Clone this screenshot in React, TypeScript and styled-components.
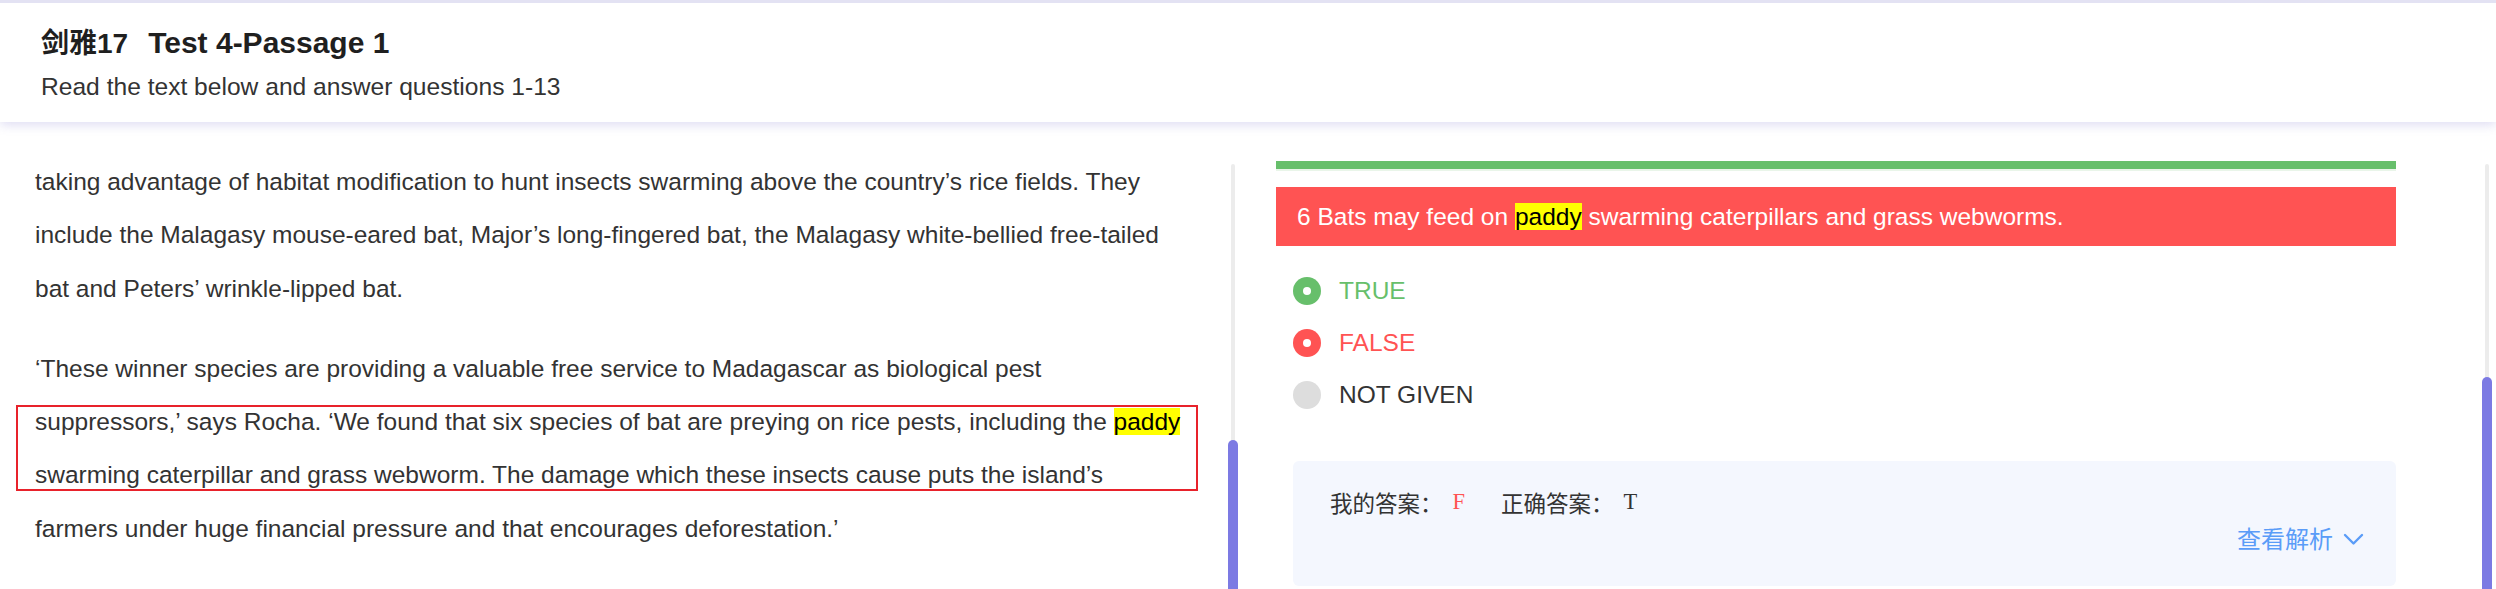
import React from "react"
import styled, { createGlobalStyle } from "styled-components"

const colors = {
  text: "#333333",
  title: "#1f1f1f",
  green: "#67bf6b",
  red: "#ff5353",
  grey: "#dddddd",
  thumb: "#7c7ae3",
  track: "#ececec",
  link: "#5a9cf8",
  answerBg: "#f4f7fe",
  lavender: "#e3e2f3",
}

const GlobalStyle = createGlobalStyle`
  html, body {
    margin: 0;
    padding: 0;
    background: #fff;
  }
  body {
    font-family: "Liberation Sans", "Noto Sans CJK SC", sans-serif;
    color: ${colors.text};
  }
  #root {
    height: 589px;
    overflow: hidden;
  }
`

const Page = styled.div`
  display: flex;
  flex-direction: column;
  height: 589px;
  width: 2496px;
  overflow: hidden;
`

const Header = styled.header`
  position: relative;
  z-index: 1;
  flex: 0 0 auto;
  height: 122px;
  box-sizing: border-box;
  border-top: 3px solid ${colors.lavender};
  background: #fff;
  box-shadow: 0 3px 10px rgba(110, 100, 200, 0.22);
  padding: 22px 0 0 41px;

  h1 {
    margin: 0;
    font-size: 30px;
    line-height: 36px;
    font-weight: bold;
    color: ${colors.title};

    .book {
      font-size: 28px;
    }

    .book + span {
      margin-left: 20px;
    }
  }

  p {
    margin: 10px 0 0;
    font-size: 24.6px;
    line-height: 30px;
    color: ${colors.text};
  }
`

const Main = styled.main`
  display: flex;
  flex: 1;
  min-height: 0;
`

const Passage = styled.section`
  flex: 0 0 1228px;
  box-sizing: border-box;
  padding: 33px 20px 0 35px;
  font-size: 24.5px;
  line-height: 53.33px;
  color: ${colors.text};
  white-space: nowrap;

  p {
    position: relative;
    margin: 0 0 26.7px;
  }
`

const Mark = styled.span`
  background: #ffff00;
  color: #000;
`

// annotation frame drawn over the quoted sentence
const Frame = styled.div`
  position: absolute;
  left: -19px;
  top: 63px;
  width: 1182px;
  height: 86px;
  box-sizing: border-box;
  border: 2px solid #e8222b;
  pointer-events: none;
`

const Rail = styled.div<{ $track: number }>`
  flex: 0 0 10px;
  display: flex;
  flex-direction: column;
  align-items: center;
  padding-top: 42px;

  .track {
    width: 4px;
    height: ${(p) => p.$track}px;
    background: ${colors.track};
    border-radius: 2px 2px 0 0;
  }

  .thumb {
    width: 10px;
    flex: 1;
    background: ${colors.thumb};
    border-radius: 5px 5px 0 0;
  }
`

const QuestionPane = styled.section`
  flex: 0 0 1244px;
  box-sizing: border-box;
  padding: 39px 86px 0 38px;
`

const GreenBar = styled.div`
  height: 8px;
  background: ${colors.green};
  box-shadow: 0 2px 0 #e9f5e9;
`

const QuestionBox = styled.div`
  margin-top: 18px;
  height: 59px;
  display: flex;
  align-items: center;
  padding-left: 21px;
  background: ${colors.red};
  color: #fff;
  font-size: 24.5px;
`

const Options = styled.ul`
  list-style: none;
  margin: 19px 0 0;
  padding: 0 0 0 17px;
`

const Option = styled.li<{ $color: string; $text: string; $checked?: boolean }>`
  height: 52px;
  display: flex;
  align-items: center;
  gap: 18px;
  font-size: 24.5px;
  color: ${(p) => p.$text};

  .radio {
    width: 28px;
    height: 28px;
    border-radius: 50%;
    background: ${(p) => p.$color};
    display: flex;
    align-items: center;
    justify-content: center;
  }

  .radio::after {
    content: "";
    display: ${(p) => (p.$checked ? "block" : "none")};
    width: 8px;
    height: 8px;
    border-radius: 50%;
    background: #fff;
  }
`

const AnswerBox = styled.div`
  margin: 40px 0 0 17px;
  height: 125px;
  box-sizing: border-box;
  padding: 26px 32px 0 37px;
  background: ${colors.answerBg};
  border-radius: 6px;
`

const AnswerLine = styled.div`
  display: flex;
  align-items: center;
  height: 30px;
  font-family: "Liberation Serif", "Noto Sans CJK SC", serif;
  font-size: 22.5px;
  color: ${colors.text};
`

const AnswerValue = styled.span<{ $color: string }>`
  margin: 0 36px 0 10px;
  color: ${(p) => p.$color};
`

const Toggle = styled.div`
  height: 40px;
  display: flex;
  justify-content: flex-end;
  align-items: center;
  gap: 10px;
  font-size: 24px;
  color: ${colors.link};

  svg {
    width: 21px;
    height: 13px;
    margin-top: 4px;
  }
`

const ScrollRail = ({ track }: { track: number }) => (
  <Rail $track={track}>
    <div className="track" />
    <div className="thumb" />
  </Rail>
)

const options = [
  { label: "TRUE", color: colors.green, text: colors.green, checked: true },
  { label: "FALSE", color: colors.red, text: colors.red, checked: true },
  { label: "NOT GIVEN", color: colors.grey, text: colors.text, checked: false },
]

export default function App() {
  return (
    <>
      <GlobalStyle />
      <Page>
        <Header>
          <h1>
            <span className="book">剑雅17</span>
            <span>Test 4-Passage 1</span>
          </h1>
          <p>Read the text below and answer questions 1-13</p>
        </Header>
        <Main>
          <Passage>
            <p>
              taking advantage of habitat modification to hunt insects swarming above the country’s rice fields. They
              <br />
              include the Malagasy mouse-eared bat, Major’s long-fingered bat, the Malagasy white-bellied free-tailed
              <br />
              bat and Peters’ wrinkle-lipped bat.
            </p>
            <p>
              ‘These winner species are providing a valuable free service to Madagascar as biological pest
              <br />
              suppressors,’ says Rocha. ‘We found that six species of bat are preying on rice pests, including the{" "}
              <Mark>paddy</Mark>
              <br />
              swarming caterpillar and grass webworm. The damage which these insects cause puts the island’s
              <br />
              farmers under huge financial pressure and that encourages deforestation.’
              <Frame />
            </p>
          </Passage>
          <ScrollRail track={276} />
          <QuestionPane>
            <GreenBar />
            <QuestionBox>
              <span>
                6 Bats may feed on <Mark>paddy</Mark> swarming caterpillars and grass webworms.
              </span>
            </QuestionBox>
            <Options>
              {options.map((o) => (
                <Option key={o.label} $color={o.color} $text={o.text} $checked={o.checked}>
                  <span className="radio" />
                  <span>{o.label}</span>
                </Option>
              ))}
            </Options>
            <AnswerBox>
              <AnswerLine>
                <span>我的答案：</span>
                <AnswerValue $color={colors.red}>F</AnswerValue>
                <span>正确答案：</span>
                <AnswerValue $color={colors.text}>T</AnswerValue>
              </AnswerLine>
              <Toggle>
                <span>查看解析</span>
                <svg viewBox="0 0 21 13" fill="none" stroke="currentColor" strokeWidth="2.4" strokeLinecap="round" strokeLinejoin="round">
                  <path d="M2 2l8.5 8.5L19 2" />
                </svg>
              </Toggle>
            </AnswerBox>
          </QuestionPane>
          <ScrollRail track={213} />
        </Main>
      </Page>
    </>
  )
}
